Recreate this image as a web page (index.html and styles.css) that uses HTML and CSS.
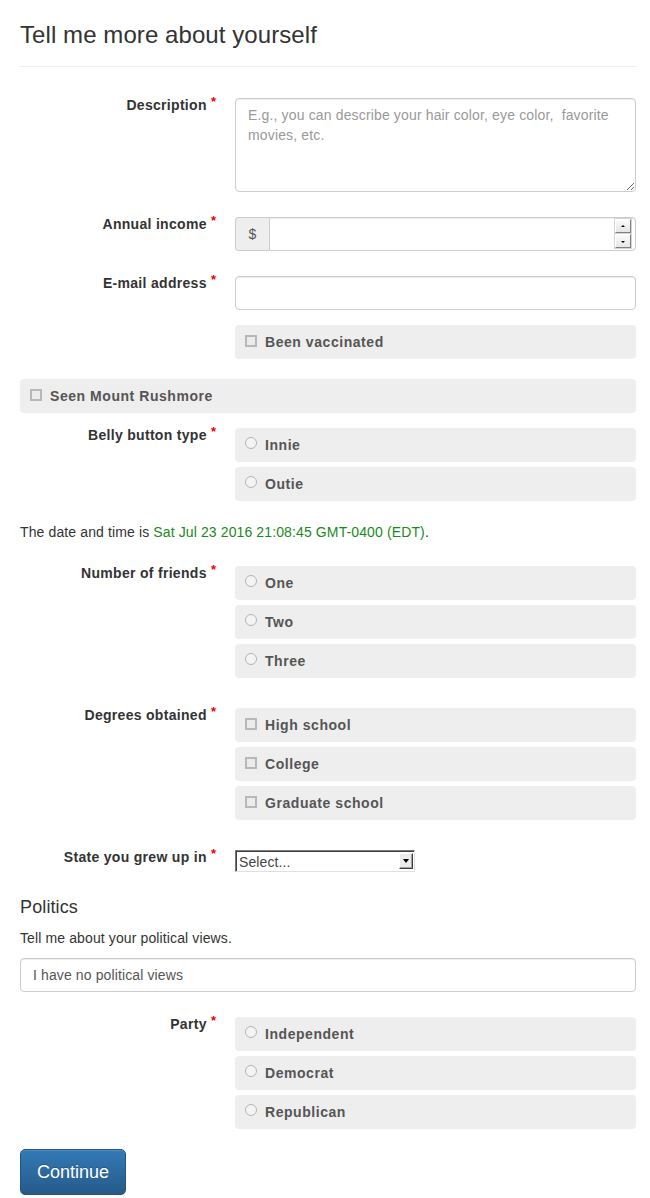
FILE: index.html
```html
<!DOCTYPE html>
<html lang="en">
<head>
<meta charset="utf-8">
<title>Tell me more about yourself</title>
<link rel="stylesheet" href="styles.css">
</head>
<body>
<div class="container">
  <h3 class="page-title">Tell me more about yourself</h3>
  <hr class="rule">
  <form class="form">
    <div class="row row-desc">
      <label class="ctl-label">Description <span class="req">*</span></label>
      <div class="ctl"><textarea class="field textarea" placeholder="E.g., you can describe your hair color, eye color,  favorite movies, etc."></textarea></div>
    </div>

    <div class="row row-income">
      <label class="ctl-label">Annual income <span class="req">*</span></label>
      <div class="ctl">
        <div class="input-group">
          <span class="addon">$</span>
          <div class="num-wrap">
            <input class="field num" type="text">
            <span class="spinner"><span class="spin up"></span><span class="spin down"></span></span>
          </div>
        </div>
      </div>
    </div>

    <div class="row row-email">
      <label class="ctl-label">E-mail address <span class="req">*</span></label>
      <div class="ctl"><input class="field" type="text"></div>
    </div>

    <div class="row row-vacc">
      <span class="ctl-label"></span>
      <div class="ctl">
        <div class="option"><span class="box"></span><span class="opt-text">Been vaccinated</span></div>
      </div>
    </div>

    <div class="option option-wide row-rush"><span class="box"></span><span class="opt-text">Seen Mount Rushmore</span></div>

    <div class="row row-belly">
      <label class="ctl-label">Belly button type <span class="req">*</span></label>
      <div class="ctl options">
        <div class="option"><span class="radio"></span><span class="opt-text">Innie</span></div>
        <div class="option"><span class="radio"></span><span class="opt-text">Outie</span></div>
      </div>
    </div>

    <p class="date-line">The date and time is <span class="date">Sat Jul 23 2016 21:08:45 GMT-0400 (EDT)</span>.</p>

    <div class="row row-friends">
      <label class="ctl-label">Number of friends <span class="req">*</span></label>
      <div class="ctl options">
        <div class="option"><span class="radio"></span><span class="opt-text">One</span></div>
        <div class="option"><span class="radio"></span><span class="opt-text">Two</span></div>
        <div class="option"><span class="radio"></span><span class="opt-text">Three</span></div>
      </div>
    </div>

    <div class="row row-degrees">
      <label class="ctl-label">Degrees obtained <span class="req">*</span></label>
      <div class="ctl options">
        <div class="option"><span class="box"></span><span class="opt-text">High school</span></div>
        <div class="option"><span class="box"></span><span class="opt-text">College</span></div>
        <div class="option"><span class="box"></span><span class="opt-text">Graduate school</span></div>
      </div>
    </div>

    <div class="row row-state">
      <label class="ctl-label">State you grew up in <span class="req">*</span></label>
      <div class="ctl">
        <div class="select"><span class="select-text">Select...</span><span class="select-btn"><span class="select-arrow"></span></span></div>
      </div>
    </div>

    <h4 class="section-title">Politics</h4>
    <p class="section-desc">Tell me about your political views.</p>
    <input class="field wide-field" type="text" value="I have no political views">

    <div class="row row-party">
      <label class="ctl-label">Party <span class="req">*</span></label>
      <div class="ctl options">
        <div class="option"><span class="radio"></span><span class="opt-text">Independent</span></div>
        <div class="option"><span class="radio"></span><span class="opt-text">Democrat</span></div>
        <div class="option"><span class="radio"></span><span class="opt-text">Republican</span></div>
      </div>
    </div>

    <button class="btn" type="button">Continue</button>
  </form>
</div>
</body>
</html>
```

FILE: styles.css
```css
* { box-sizing: border-box; }

html, body {
  margin: 0;
  padding: 0;
  background: #fff;
}

body {
  font-family: "Liberation Sans", Arial, Helvetica, sans-serif;
  font-size: 14px;
  line-height: 20px;
  color: #333;
  letter-spacing: 0.12px;
}

.container {
  padding: 0 14px 0 20px;
}

.page-title {
  margin: 0;
  padding-top: 22px;
  font-size: 24px;
  line-height: 26px;
  font-weight: 500;
  color: #333;
  letter-spacing: 0.08px;
}

.rule {
  margin: 18px 0 0 0;
  border: 0;
  border-top: 1px solid #eee;
}

.form {
  display: flex;
  flex-direction: column;
  padding-top: 31px;
}

.row {
  display: grid;
  grid-template-columns: 215px 1fr;
  align-items: start;
}

.ctl-label {
  display: block;
  margin-top: -3px;
  padding-right: 19px;
  text-align: right;
  font-weight: bold;
  color: #333;
  letter-spacing: 0.3px;
}

.req {
  color: #e00;
  font-size: 13px;
  font-weight: bold;
  position: relative;
  top: -4px;
  letter-spacing: 0;
}

.field {
  display: block;
  width: 100%;
  height: 34px;
  padding: 6px 12px;
  font-family: inherit;
  font-size: 14px;
  line-height: 20px;
  letter-spacing: 0.12px;
  color: #555;
  background: #fff;
  border: 1px solid #ccc;
  border-radius: 4px;
  box-shadow: inset 0 1px 1px rgba(0,0,0,.075);
  outline: none;
}

.textarea {
  height: 94px;
  resize: vertical;
  letter-spacing: 0.15px;
}

.textarea::placeholder { color: #999; }

.row-income { margin-top: 25px; }
.row-email { margin-top: 25px; }
.row-vacc { margin-top: 15px; }
.row-rush { margin-top: 20px; }
.row-belly { margin-top: 15px; }
.row-friends { margin-top: 24px; }
.row-degrees { margin-top: 30px; }
.row-state { margin-top: 30px; }
.row-party { margin-top: 25px; }

.input-group {
  display: flex;
}

.addon {
  width: 34px;
  height: 34px;
  flex: none;
  display: flex;
  align-items: center;
  justify-content: center;
  background: #eee;
  border: 1px solid #ccc;
  border-right: 0;
  border-radius: 4px 0 0 4px;
  color: #555;
}

.num-wrap {
  position: relative;
  flex: 1;
}

.num {
  border-radius: 0 4px 4px 0;
}

.spinner {
  position: absolute;
  right: 5px;
  top: 2px;
  width: 16px;
  height: 29px;
  display: flex;
  flex-direction: column;
}

.spin {
  flex: 1;
  position: relative;
  background: linear-gradient(#fafafa, #e6e6e6);
  border: 1px solid #a0a0a0;
  border-color: #fff #808080 #808080 #fff;
  box-shadow: 0 0 0 1px #d4d4d4;
}

.spin.up { margin-bottom: 1px; }

.spin::after {
  content: "";
  position: absolute;
  left: 5px;
  width: 0;
  height: 0;
  border-left: 2px solid transparent;
  border-right: 2px solid transparent;
}

.spin.up::after {
  top: 5px;
  border-bottom: 2px solid #000;
}

.spin.down::after {
  top: 6px;
  border-top: 2px solid #000;
}

.options {
  display: flex;
  flex-direction: column;
  gap: 5px;
}

.option {
  display: flex;
  align-items: center;
  height: 34px;
  padding-left: 10px;
  background: #eee;
  border-radius: 4px;
}

.opt-text {
  margin-left: 8px;
  font-weight: bold;
  color: #555;
  letter-spacing: 0.55px;
}

.box {
  width: 12px;
  height: 12px;
  flex: none;
  border: 2px solid #b8b8b8;
  background: #ececec;
  position: relative;
  top: -1px;
}

.radio {
  width: 12px;
  height: 12px;
  flex: none;
  border: 1.5px solid #b5b5b5;
  border-radius: 50%;
  background: #f4f4f4;
  position: relative;
  top: -2px;
}

.date-line {
  margin: 21px 0 0 0;
}

.date { color: #1a8a1a; }

.select {
  width: 180px;
  height: 22px;
  display: flex;
  align-items: center;
  justify-content: space-between;
  border: 1px solid;
  border-color: #7a7a7a #e0e0e0 #e0e0e0 #7a7a7a;
  box-shadow: inset 1px 1px 0 #404040;
  background: #fff;
  padding: 0 1px 0 3px;
  font-size: 14px;
  color: #444;
  letter-spacing: 0.1px;
}

.select-text {
  position: relative;
  top: 1px;
}

.select-btn {
  width: 14px;
  height: 16px;
  background: #ececec;
  border: 1px solid;
  border-color: #fff #404040 #404040 #fff;
  box-shadow: inset -1px -1px 0 #a0a0a0;
  display: flex;
  align-items: center;
  justify-content: center;
}

.select-arrow {
  width: 0;
  height: 0;
  border-left: 3.5px solid transparent;
  border-right: 3.5px solid transparent;
  border-top: 4px solid #000;
}

.section-title {
  margin: 25px 0 0 0;
  font-size: 18px;
  line-height: 20px;
  font-weight: 500;
  color: #333;
}

.section-desc {
  margin: 11px 0 0 0;
}

.wide-field {
  margin-top: 10px;
}

.btn {
  align-self: flex-start;
  margin-top: 20px;
  height: 46px;
  padding: 0 16px;
  font-family: inherit;
  font-size: 18px;
  color: #fff;
  border: 1px solid #245580;
  border-radius: 5px;
  background: linear-gradient(#337ab7, #265a88);
  box-shadow: inset 0 1px 0 rgba(255,255,255,.15), 0 1px 1px rgba(0,0,0,.075);
  text-shadow: 0 -1px 0 rgba(0,0,0,.2);
  cursor: pointer;
}
```
